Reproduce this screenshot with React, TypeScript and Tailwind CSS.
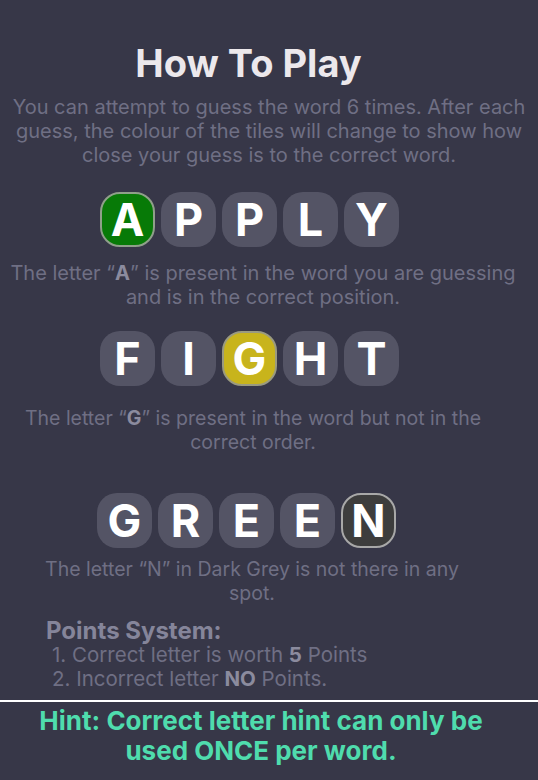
const font = { fontFamily: "Inter, 'Noto Sans', sans-serif" };

type Tile = { ch: string; kind?: "green" | "yellow" | "dark" };

const Tiles = ({ tiles, className }: { tiles: Tile[]; className: string }) => (
  <div className={`flex flex-row gap-[6px] ${className}`}>
    {tiles.map((t, i) => {
      let cls = "bg-[#545465] border-2 border-transparent";
      if (t.kind === "green") cls = "bg-[#077a07] border-2 border-[#8fa08a]";
      if (t.kind === "yellow") cls = "bg-[#c8b41c] border-2 border-[#9a9a80]";
      if (t.kind === "dark") cls = "bg-[#3d3d3d] border-2 border-[#a8a8a8]";
      return (
        <div
          key={i}
          className={`w-[55px] h-[55px] rounded-[20px] flex items-center justify-center text-white font-bold text-[45px] leading-none ${cls}`}
        >
          {t.ch}
        </div>
      );
    })}
  </div>
);

export default function App() {
  return (
    <div className="w-[538px] h-[780px] bg-[#373748] overflow-hidden" style={font}>
      <h1 className="pt-[40px] pr-[41px] text-center text-[38px] font-bold leading-[46px] text-[#ece8ec]">
        How To Play
      </h1>
      <p className="mt-[9px] px-[6px] text-center text-[20px] leading-[24px] text-[#6f6f84]">
        You can attempt to guess the word 6 times. After each guess, the colour of the tiles
        will change to show how close your guess is to the correct word.
      </p>

      <div className="mt-[25px]">
        <Tiles
          className="pl-[100px]"
          tiles={[{ ch: "A", kind: "green" }, { ch: "P" }, { ch: "P" }, { ch: "L" }, { ch: "Y" }]}
        />
      </div>
      <p className="mt-[14px] pr-[12px] text-center text-[20px] leading-[24px] text-[#6f6f84]">
        The letter “<b className="text-[#8b8b9e]">A</b>” is present in the word you are guessing
        and is in the correct position.
      </p>

      <div className="mt-[22px]">
        <Tiles
          className="pl-[100px]"
          tiles={[{ ch: "F" }, { ch: "I" }, { ch: "G", kind: "yellow" }, { ch: "H" }, { ch: "T" }]}
        />
      </div>
      <p className="mt-[20px] pl-[10px] pr-[42px] text-center text-[19.5px] leading-[24px] text-[#6f6f84]">
        The letter “<b className="text-[#8b8b9e]">G</b>” is present in the word but not in the
        correct order.
      </p>

      <div className="mt-[39px]">
        <Tiles
          className="pl-[97px]"
          tiles={[{ ch: "G" }, { ch: "R" }, { ch: "E" }, { ch: "E" }, { ch: "N", kind: "dark" }]}
        />
      </div>
      <p className="mt-[9px] pl-[37px] pr-[71px] text-center text-[19.5px] leading-[24px] text-[#6f6f84]">
        The letter “N” in Dark Grey is not there in any spot.
      </p>

      <div className="mt-[14px] pl-[46px] text-[#6f6f84]">
        <h2 className="text-[24px] font-bold leading-[24px] text-[#85859a]">Points System:</h2>
        <ol className="pl-[6px] text-[20.5px] leading-[24px]">
          <li>
            1. Correct letter is worth <b className="text-[#8b8b9e]">5</b> Points
          </li>
          <li>
            2. Incorrect letter <b className="text-[#8b8b9e]">NO</b> Points.
          </li>
        </ol>
      </div>

      <div className="mt-[9px] border-t-2 border-white" />
      <p className="mt-[4px] pl-[24px] pr-[40px] text-center text-[26px] font-bold leading-[30px] text-[#4fdcad]">
        Hint: Correct letter hint can only be used ONCE per word.
      </p>
    </div>
  );
}
